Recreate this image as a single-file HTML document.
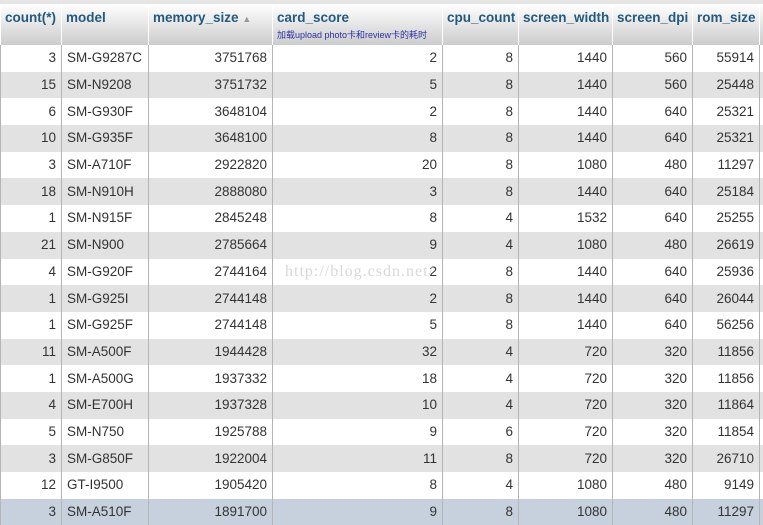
<!DOCTYPE html><html><head><meta charset="utf-8"><style>
body{margin:0;width:763px;height:524px;overflow:hidden;background:#fff;font-family:"Liberation Sans","Noto Sans CJK SC",sans-serif;position:relative}
.top{position:absolute;left:0;top:0;width:763px;height:4px;background:#e5e5e5}
table{position:absolute;left:0;top:4px;border-collapse:collapse;table-layout:fixed;width:770px}
th{height:41px;padding:0 4px;text-align:left;vertical-align:top;font-size:13.5px;font-weight:bold;color:#235a81;background:linear-gradient(#fff,#ccc);border-right:1px solid #fff;border-left:1px solid #fff;padding-top:6px;box-sizing:border-box;white-space:nowrap}
th small{display:block;font-size:9px;font-weight:normal;color:#2a2fa8;margin-top:3px}
td{height:26.7px;padding:0 5px;font-size:13.5px;color:#333;text-align:right;border-left:1px solid #b5b5b5;box-sizing:border-box;white-space:nowrap;overflow:hidden;line-height:16px}
td:nth-child(2){text-align:left}
tr:nth-child(even) td{background:#e2e2e2}
tr.h td{background:#c7d1dd}
.wm{position:absolute;left:285px;top:263px;font-family:"Liberation Serif",serif;font-size:16px;color:#d8d8d8;letter-spacing:1px}
</style></head><body><div class="top"></div>
<table><colgroup><col style="width:61px"><col style="width:87px"><col style="width:124px"><col style="width:170px"><col style="width:76px"><col style="width:94px"><col style="width:80px"><col style="width:67px"><col style="width:11px"></colgroup>
<thead><tr><th>count(*)</th><th>model</th><th>memory_size <span style="color:#999;font-size:9px">&#9650;</span></th><th>card_score<small>加载upload photo卡和review卡的耗时</small></th><th>cpu_count</th><th>screen_width</th><th>screen_dpi</th><th>rom_size</th><th></th></tr></thead>
<tbody>
<tr><td>3</td><td>SM-G9287C</td><td>3751768</td><td>2</td><td>8</td><td>1440</td><td>560</td><td>55914</td><td></td></tr>
<tr><td>15</td><td>SM-N9208</td><td>3751732</td><td>5</td><td>8</td><td>1440</td><td>560</td><td>25448</td><td></td></tr>
<tr><td>6</td><td>SM-G930F</td><td>3648104</td><td>2</td><td>8</td><td>1440</td><td>640</td><td>25321</td><td></td></tr>
<tr><td>10</td><td>SM-G935F</td><td>3648100</td><td>8</td><td>8</td><td>1440</td><td>640</td><td>25321</td><td></td></tr>
<tr><td>3</td><td>SM-A710F</td><td>2922820</td><td>20</td><td>8</td><td>1080</td><td>480</td><td>11297</td><td></td></tr>
<tr><td>18</td><td>SM-N910H</td><td>2888080</td><td>3</td><td>8</td><td>1440</td><td>640</td><td>25184</td><td></td></tr>
<tr><td>1</td><td>SM-N915F</td><td>2845248</td><td>8</td><td>4</td><td>1532</td><td>640</td><td>25255</td><td></td></tr>
<tr><td>21</td><td>SM-N900</td><td>2785664</td><td>9</td><td>4</td><td>1080</td><td>480</td><td>26619</td><td></td></tr>
<tr><td>4</td><td>SM-G920F</td><td>2744164</td><td>2</td><td>8</td><td>1440</td><td>640</td><td>25936</td><td></td></tr>
<tr><td>1</td><td>SM-G925I</td><td>2744148</td><td>2</td><td>8</td><td>1440</td><td>640</td><td>26044</td><td></td></tr>
<tr><td>1</td><td>SM-G925F</td><td>2744148</td><td>5</td><td>8</td><td>1440</td><td>640</td><td>56256</td><td></td></tr>
<tr><td>11</td><td>SM-A500F</td><td>1944428</td><td>32</td><td>4</td><td>720</td><td>320</td><td>11856</td><td></td></tr>
<tr><td>1</td><td>SM-A500G</td><td>1937332</td><td>18</td><td>4</td><td>720</td><td>320</td><td>11856</td><td></td></tr>
<tr><td>4</td><td>SM-E700H</td><td>1937328</td><td>10</td><td>4</td><td>720</td><td>320</td><td>11864</td><td></td></tr>
<tr><td>5</td><td>SM-N750</td><td>1925788</td><td>9</td><td>6</td><td>720</td><td>320</td><td>11854</td><td></td></tr>
<tr><td>3</td><td>SM-G850F</td><td>1922004</td><td>11</td><td>8</td><td>720</td><td>320</td><td>26710</td><td></td></tr>
<tr><td>12</td><td>GT-I9500</td><td>1905420</td><td>8</td><td>4</td><td>1080</td><td>480</td><td>9149</td><td></td></tr>
<tr class="h"><td>3</td><td>SM-A510F</td><td>1891700</td><td>9</td><td>8</td><td>1080</td><td>480</td><td>11297</td><td></td></tr>
</tbody></table>
<div class="wm">http://blog.csdn.net/</div>
</body></html>
